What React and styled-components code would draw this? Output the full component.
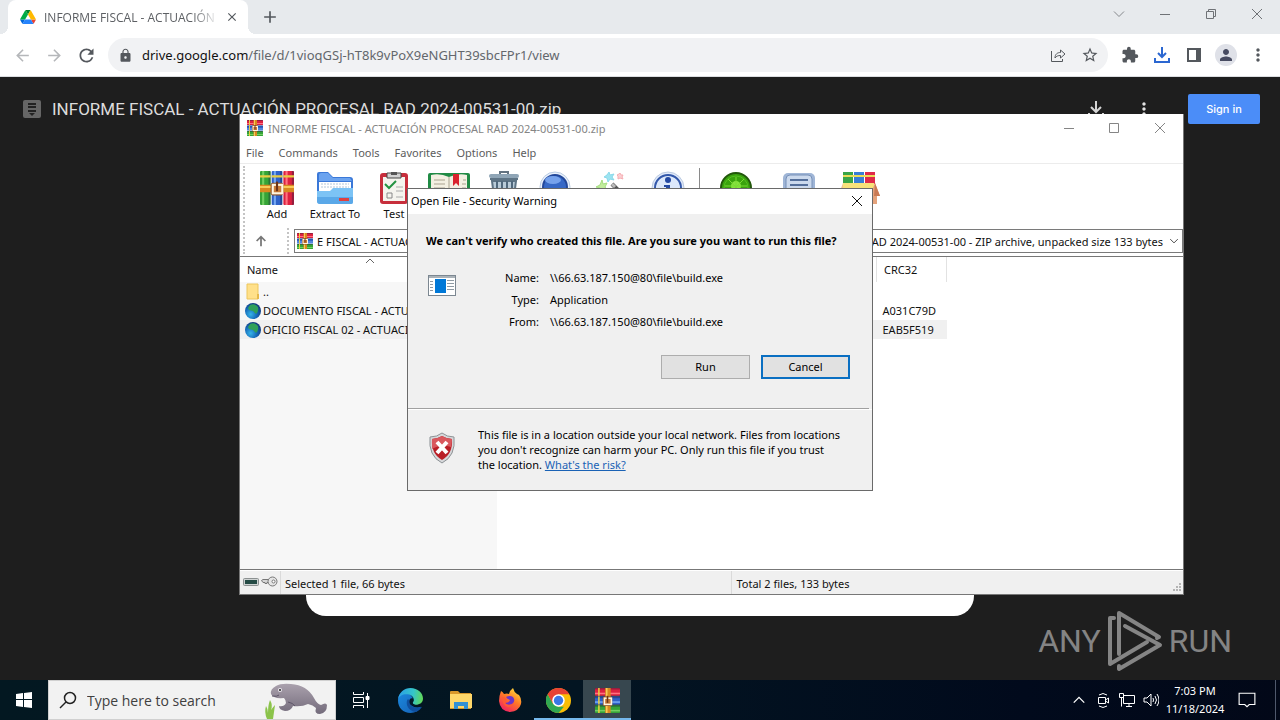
import React from "react";
import styled, { createGlobalStyle, css } from "styled-components";
import {
  MdArrowBack,
  MdArrowForward,
  MdRefresh,
  MdLock,
  MdStarBorder,
  MdExtension,
  MdPerson,
  MdMoreVert,
  MdClose,
  MdAdd,
} from "react-icons/md";

const Global = createGlobalStyle`
  * { box-sizing: border-box; }
  body { margin: 0; background: #1e1e1e; font-family: "Noto Sans", "Open Sans", sans-serif; font-size: 11px; color: #111; }
  button, input { font: inherit; color: inherit; margin: 0; }
  button { border: 0; padding: 0; background: none; }
  svg { display: block; flex: none; }
`;

const Desktop = styled.div`
  position: relative;
  display: flex;
  flex-direction: column;
  height: 100vh;
  overflow: hidden;
`;

/* ---------- Browser ---------- */

const Browser = styled.div`
  flex: 1;
  min-height: 0;
  display: flex;
  flex-direction: column;
`;

const TabStrip = styled.div`
  display: flex;
  align-items: stretch;
  height: 34px;
  padding-left: 8px;
  background: #e7eaed;
`;

const Tab = styled.div`
  position: relative;
  display: flex;
  align-items: center;
  width: 240px;
  padding: 0 9px 0 12px;
  background: #fff;
  border-radius: 8px 8px 0 0;
  &::before,
  &::after {
    content: "";
    position: absolute;
    bottom: 0;
    width: 8px;
    height: 8px;
  }
  &::before {
    left: -8px;
    background: radial-gradient(circle at 0 0, #e7eaed 8px, #fff 8px);
  }
  &::after {
    right: -8px;
    background: radial-gradient(circle at 100% 0, #e7eaed 8px, #fff 8px);
  }
`;

const TabTitle = styled.span`
  flex: 1;
  margin: 0 6px 0 8px;
  overflow: hidden;
  white-space: nowrap;
  font-family: "Open Sans", sans-serif;
  font-size: 12px;
  color: #5c5f63;
  mask-image: linear-gradient(to right, #000 85%, transparent);
`;

const IconButton = styled.button`
  display: flex;
  align-items: center;
  justify-content: center;
  width: ${(p) => p.$w || 32}px;
  height: ${(p) => p.$h || 28}px;
  color: ${(p) => p.$color || "#54585d"};
`;

const WindowControls = styled.div`
  display: flex;
  margin-left: auto;
`;

const BrowserBar = styled.div`
  display: flex;
  align-items: center;
  height: 43px;
  padding: 0 6px;
  background: #fff;
  border-bottom: 1px solid #dcdee1;
`;

const Omnibox = styled.div`
  flex: 1;
  display: flex;
  align-items: center;
  height: 34px;
  margin: 0 6px 0 6px;
  padding: 0 2px 0 10px;
  border-radius: 17px;
  background: #f1f2f4;
`;

const Url = styled.a`
  flex: 1;
  margin-left: 9px;
  font-size: 13px;
  color: #63676c;
  text-decoration: none;
  b {
    font-weight: 400;
    color: #111;
  }
`;

const Avatar = styled.span`
  display: flex;
  align-items: center;
  justify-content: center;
  width: 22px;
  height: 22px;
  border-radius: 50%;
  background: #dfe1e8;
  color: #474b61;
`;

const DrivePage = styled.main`
  flex: 1;
  display: flex;
  flex-direction: column;
  align-items: center;
  padding-bottom: 64px;
  background: #1e1e1e;
`;

const DriveHeader = styled.header`
  align-self: stretch;
  display: flex;
  align-items: center;
  height: 64px;
  padding: 0 20px 0 22px;
`;

const DriveTitle = styled.h1`
  flex: 1;
  margin: 0 0 0 10px;
  font: 400 17px/20px Roboto, sans-serif;
  color: #dcdcdc;
`;

const SignIn = styled.button`
  width: 72px;
  height: 30px;
  margin-left: 20px;
  border-radius: 2px;
  background: #4b8df8;
  color: #fff;
  font: 500 11px Inter, sans-serif;
`;

const PreviewCard = styled.div`
  flex: 1;
  width: 668px;
  border-radius: 20px;
  background: #fff;
`;

const Watermark = styled.div`
  position: absolute;
  right: 48px;
  bottom: 48px;
  display: flex;
  align-items: center;
  gap: 5px;
  color: #848484;
  font: 400 32px/62px Roboto, sans-serif;
`;

/* ---------- Archive window ---------- */

const ArchiveWindow = styled.section`
  position: absolute;
  left: 239px;
  right: 96px;
  top: 114px;
  bottom: 125px;
  display: flex;
  flex-direction: column;
  background: #fff;
  border: 1px solid #777;
  border-top-width: 0;
`;

const TitleBar = styled.div`
  display: flex;
  align-items: center;
  height: 28px;
  padding: 0 1px 0 7px;
  color: #858585;
  span {
    flex: 1;
    margin-left: 5px;
  }
`;

const MenuBar = styled.nav`
  display: flex;
  gap: 15px;
  height: 22px;
  padding: 0 6px;
  border-bottom: 1px solid #ececec;
  button {
    color: #5c5c5c;
    line-height: 20px;
  }
`;

const grip = css`
  border-left: 2px dotted #c4c4c4;
`;

const Bars = styled.div`
  margin: 2px 0 2px 3px;
  ${grip}
`;

const ToolBar = styled.div`
  display: flex;
  height: 62px;
  padding: 5px 0 0 3px;
`;

const Tool = styled.button`
  display: flex;
  flex-direction: column;
  align-items: center;
  width: ${(p) => p.$w}px;
  white-space: nowrap;
  line-height: 18px;
`;

const ToolDivider = styled.i`
  width: 18px;
  height: 48px;
  margin-top: -3px;
  background: linear-gradient(#8a8a8a, #8a8a8a) center / 1px 100% no-repeat;
`;

const AddressRow = styled.div`
  display: flex;
  align-items: center;
  height: 26px;
`;

const AddressGap = styled.i`
  align-self: stretch;
  width: 7px;
  margin-left: 10px;
  ${grip}
`;

const Combo = styled.button`
  flex: 1;
  display: flex;
  align-items: center;
  height: 24px;
  padding: 0 2px;
  border: 1px solid #7a7a7a;
  white-space: nowrap;
`;

const ComboStart = styled.span`
  flex: 1;
  margin-left: 4px;
  overflow: hidden;
  text-align: left;
`;

const ComboEnd = styled.span`
  margin-right: 5px;
`;

const ListArea = styled.div`
  flex: 1;
  position: relative;
  border-top: 1px solid #777;
  border-bottom: 1px solid #777;
  background: linear-gradient(#f7f7f7, #f7f7f7) 0 25px / 257px 100% no-repeat;
`;

const SortMark = styled.svg`
  position: absolute;
  left: 125px;
  top: 1px;
`;

const FileTable = styled.table`
  table-layout: fixed;
  width: 707px;
  border-collapse: collapse;
  th,
  td {
    padding: 0 6px;
    text-align: left;
    font-weight: 400;
    white-space: nowrap;
    overflow: hidden;
  }
  th {
    height: 25px;
    padding-left: 7px;
    border-right: 1px solid #e2e2e2;
  }
  td {
    height: 19px;
  }
  td:first-child {
    padding-left: 5px;
  }
`;

const FileRow = styled.tr`
  background: ${(p) => (p.$selected ? "#f0f0f0" : "transparent")};
`;

const FileName = styled.div`
  display: flex;
  align-items: center;
  gap: 2px;
  line-height: 18px;
`;

const StatusBar = styled.footer`
  display: flex;
  align-items: stretch;
  height: 23px;
  margin-top: 1px;
  background: #f0f0f0;
  line-height: 26px;
`;

const StatusIcons = styled.div`
  display: flex;
  align-items: center;
  gap: 2px;
  width: 41px;
  padding: 0 0 1px 3px;
  border-right: 1px solid #dadada;
`;

const StatusCell = styled.div`
  flex: ${(p) => p.$grow};
  padding-left: 4px;
  border-right: ${(p) => (p.$line ? "1px solid #dadada" : "0")};
`;

/* ---------- Dialog ---------- */

const Dialog = styled.section`
  position: absolute;
  left: 407px;
  top: 188px;
  width: 466px;
  background: #f0f0f0;
  border: 1px solid #6a6a6a;
  color: #000;
`;

const DialogTitle = styled.header`
  display: flex;
  align-items: center;
  justify-content: space-between;
  height: 25px;
  padding: 0 3px 2px 3px;
  background: #fff;
`;

const DialogBody = styled.div`
  padding: 18px 22px 29px 18px;
`;

const Question = styled.h2`
  margin: 0;
  font-size: 11px;
  line-height: 17px;
  font-weight: 700;
  white-space: nowrap;
`;

const Details = styled.div`
  display: flex;
  padding: 18px 0 22px 2px;
  svg {
    margin-top: 8px;
  }
`;

const Facts = styled.dl`
  display: grid;
  grid-template-columns: 83px 1fr;
  column-gap: 11px;
  margin: 0;
  line-height: 22px;
  dt {
    text-align: right;
  }
  dd {
    margin: 0;
  }
`;

const Actions = styled.div`
  display: flex;
  justify-content: flex-end;
  gap: 11px;
`;

const PushButton = styled.button`
  width: 89px;
  height: 24px;
  padding-bottom: 2px;
  background: #e1e1e1;
  border: ${(p) => (p.$focus ? "2px solid #0a6fc2" : "1px solid #adadad")};
`;

const DialogFooter = styled.footer`
  display: flex;
  height: 81px;
  padding: 17px 20px 0 20px;
  border-top: 1px solid #fff;
  svg {
    margin: 5px 0 0 0;
  }
  p {
    margin: 0 0 0 22px;
    line-height: 15px;
    white-space: nowrap;
  }
  a {
    color: #1a62b5;
  }
`;

const Rule = styled.hr`
  height: 1px;
  margin: 0 3px 0 0;
  border: 0;
  background: #a0a0a0;
`;

/* ---------- Taskbar ---------- */

const TaskBar = styled.footer`
  display: flex;
  height: 40px;
  background: linear-gradient(to right, #031821, #031522 45%, #010a1c 80%, #020818);
  color: #fff;
`;

const TaskButton = styled.button`
  display: flex;
  align-items: center;
  justify-content: center;
  width: ${(p) => p.$w || 49}px;
  height: 40px;
  color: #fff;
  background: ${(p) => (p.$active ? "#37474f" : "transparent")};
  box-shadow: ${(p) => (p.$open ? "inset 0 -2px #76b9ed" : "none")};
`;

const SearchBox = styled.label`
  display: flex;
  align-items: center;
  width: 288px;
  padding: 0 7px 0 10px;
  background: #f2f2f2;
  border: 1px solid #d0d0d0;
  input {
    flex: 1;
    min-width: 0;
    height: 30px;
    margin-left: 9px;
    padding: 1px;
    border: 0;
    background: transparent;
    font-family: "Open Sans", sans-serif;
    font-size: 14px;
  }
  input::placeholder {
    color: #404040;
    opacity: 1;
  }
`;

const Apps = styled.nav`
  display: flex;
  padding-left: 1px;
`;

const Tray = styled.div`
  display: flex;
  align-items: center;
  margin-left: auto;
  padding-right: 4px;
`;

const Clock = styled.time`
  width: 64px;
  text-align: center;
  line-height: 18px;
`;

const PeekLine = styled.i`
  width: 1px;
  height: 40px;
  margin-left: 8px;
  background: #4f586c;
`;

/* ---------- Drawings ---------- */

const BooksIcon = ({ size = 32, rotate = 0 }) => (
  <svg width={size} height={size} viewBox="0 0 32 32">
    <g transform={`rotate(${rotate} 16 16)`}>
      <rect width="10" height="32" rx="1" fill="#36a437" />
      <rect x="11" width="10" height="32" rx="1" fill="#2f62c8" />
      <rect x="22" width="10" height="32" rx="1" fill="#dc2140" />
      <path d="M2 0h2v32H2z" fill="#72cf62" />
      <path d="M13 0h2v32h-2z" fill="#75a8f2" />
      <path d="M24 0h2v32h-2z" fill="#ff7280" />
      <path d="M8 0h2v32H8zM19 0h2v32h-2zM30 0h2v32h-2z" fill="#17183c" opacity=".35" />
      <path d="M0 4h10v2H0zM11 4h10v2H11zM22 4h10v2H22z" fill="#e9cd43" />
      <path d="M0 13h32v7H0z" fill="#d88920" />
      <path d="M0 14h32v2H0z" fill="#f8cb58" />
    </g>
    <rect x="10" y="11" width="12" height="12" rx="2" fill="#8d5227" />
    <rect x="12" y="13" width="9" height="8" fill="#c97c38" stroke="#fff5df" strokeWidth="2" />
    <path d="M16 10v9" stroke="#6c3317" strokeWidth="2" />
  </svg>
);

const DriveLogo = () => (
  <svg width="16" height="14" viewBox="0 0 87.3 78">
    <path fill="#0066da" d="m6.6 66.85 3.85 6.65c.8 1.4 1.95 2.5 3.3 3.3L27.5 53H0c0 1.55.4 3.1 1.2 4.5z" />
    <path fill="#00ac47" d="M43.65 25 29.9 1.2c-1.35.8-2.5 1.9-3.3 3.3L1.2 48.5C.4 49.9 0 51.45 0 53h27.5z" />
    <path fill="#ea4335" d="M73.55 76.8c1.35-.8 2.5-1.9 3.3-3.3l1.6-2.75 7.65-13.25c.8-1.4 1.2-2.95 1.2-4.5H59.8l5.85 11.5z" />
    <path fill="#00832d" d="M43.65 25 57.4 1.2C56.05.4 54.5 0 52.9 0H34.4c-1.6 0-3.15.45-4.5 1.2z" />
    <path fill="#2684fc" d="M59.8 53H27.5L13.75 76.8c1.35.8 2.9 1.2 4.5 1.2h50.8c1.6 0 3.15-.45 4.5-1.2z" />
    <path fill="#ffba00" d="m73.4 26.5-12.7-22c-.8-1.4-1.95-2.5-3.3-3.3L43.65 25 59.8 53h27.45c0-1.55-.4-3.1-1.2-4.5z" />
  </svg>
);

const Line = ({ size = 16, d, sw = 1, ...rest }) => (
  <svg width={size} height={size} viewBox="0 0 16 16" fill="none" stroke="currentColor" strokeWidth={sw} {...rest}>
    <path d={d} />
  </svg>
);

const shapes = {
  min: "M3 8.5h10",
  max: "M3.5 3.5h9v9h-9z",
  restore: "M3.5 5.5h7v7h-7zM5.5 5.5v-2h7v7h-2",
  close: "M3 3l10 10M13 3L3 13",
  down: "M3 5.500l5 5 5-5",
};

const ShareIcon = () => (
  <Line d="M1.500 4v10.500h11V12M5 11c0-4 2.500-5.500 5.500-5.500V3l4.500 4-4.500 4V8.500C8 8.500 6.500 9 5 11z" />
);

const DownloadTray = () => (
  <svg width="18" height="18" viewBox="0 0 18 18" fill="none" stroke="#2b67d1" strokeWidth="2">
    <path d="M9 1v10M5 7l4 4 4-4M2 12v4h14v-4" />
  </svg>
);

const SidePanel = () => (
  <svg width="14" height="14" viewBox="0 0 14 14">
    <path fillRule="evenodd" d="M0 0h14v14H0zM2 2v10h7V2z" fill="currentColor" />
  </svg>
);

const ZipIcon = () => (
  <svg width="20" height="20" viewBox="0 0 20 20">
    <rect x="1" y="1" width="18" height="18" rx="2" fill="#666" />
    <path d="M6 5h8M6 8h8M6 12h8" stroke="#222" strokeWidth="2" />
    <path d="M7 14h6l-3 3z" fill="#222" />
  </svg>
);

const DriveDownload = () => (
  <svg width="20" height="20" viewBox="0 0 20 20" fill="none" stroke="#d4d4d4" strokeWidth="2">
    <path d="M10 2v10M5 8l5 5 5-5M3 14v4h14v-4" />
  </svg>
);

const FolderTool = () => (
  <svg width="38" height="34" viewBox="0 0 38 34">
    <path d="M1 25V3q0-2 2-2h9l5 5h17q3 0 3 3v18H3z" fill="#3a78d8" />
    <path d="M3 4q0-2 2-2h7l5 5h17l2 3H3z" fill="#6ba3ef" />
    <path d="M3 11h32v11H3z" fill="#fff" />
    <path d="M5 13h28M5 16h28" stroke="#b4c7d8" strokeDasharray="2 1" />
    <path d="M1 20h13l3-3h20v14q0 2-2 2H4q-3 0-3-3z" fill="#7cc3f5" />
    <path d="M1 26h36v5q0 2-2 2H4q-3 0-3-3z" fill="#5aa8e8" />
    <rect x="23" y="27" width="10" height="3" fill="#e0403f" />
  </svg>
);

const TestTool = () => (
  <svg width="30" height="34" viewBox="0 0 30 34">
    <rect x="1" y="2" width="28" height="31" rx="3" fill="#c72e3c" />
    <rect x="4" y="6" width="22" height="24" fill="#f5f4ee" />
    <path d="M8 2h14v5H8z" fill="#d2d2d2" stroke="#444" />
    <path d="M12 1h6v3h-6z" fill="#555" />
    <path d="m6 13 4 4 7-7" stroke="#249342" strokeWidth="2" fill="none" />
    <path d="M17 16h7M17 20h7M17 26h7" stroke="#aaa" />
    <path d="M8 22h5v5H8z" fill="none" stroke="#888" />
  </svg>
);

const BookTool = () => (
  <svg width="44" height="32" viewBox="0 0 44 32">
    <rect x="1" y="2" width="42" height="28" rx="2" fill="#218b45" />
    <path d="M4 4q9-2 18 2 9-4 18-2v24H4z" fill="#f4f0e2" />
    <path d="M22 6v22M7 9h11M7 13h11M7 17h11M36 9h3M35 13h4M35 17h4" stroke="#aaa390" />
    <path d="M26 3h6v12l-3-3-3 3z" fill="#d9232e" />
  </svg>
);

const TrashTool = () => (
  <svg width="32" height="34" viewBox="0 0 32 34">
    <path d="M12 3V1h8v2" fill="none" stroke="#637381" strokeWidth="2" />
    <rect x="1" y="3" width="30" height="4" rx="2" fill="#8fa5b6" />
    <path d="M2 8h28M4 10l3 23h18l3-23z" fill="#b9cbd8" stroke="#5e7485" strokeWidth="2" />
    <path d="M9 10v20M14 10v20M19 10v20M24 10v20" stroke="#50687c" strokeWidth="2" />
  </svg>
);

const FindTool = () => (
  <svg width="34" height="34" viewBox="0 0 34 34">
    <circle cx="17" cy="16" r="15" fill="#eaf1fb" stroke="#b9cbe3" />
    <circle cx="17" cy="16" r="12" fill="#3668c6" stroke="#22479a" strokeWidth="2" />
    <ellipse cx="15" cy="9" rx="8" ry="4" fill="#76a2ec" />
  </svg>
);

const WizardTool = () => (
  <svg width="34" height="34" viewBox="0 0 34 34" fill="none">
    <path d="m18 13 14 14" stroke="#555" strokeWidth="4" />
    <path d="m18 13 3 3" stroke="#bbb" strokeWidth="3" />
    <g>
      <path d="m15 1 1 3 4-1-2 3 2 3-4-1-2 3-1-4-3-1 3-2z" fill="#9ce4f1" stroke="#8bd9ea" />
      <path d="m8 9 1 4 4-1-2 4 2 3-4-1-2 3-1-4-4-1 4-2z" fill="#c1ec9c" stroke="#a4dd80" />
      <path d="m26 2 1 2 2 0-1 2 1 2-3-1-2 1 0-3-1-1 2-1z" fill="#fbd0d3" stroke="#f6aeb3" />
    </g>
  </svg>
);

const InfoTool = () => (
  <svg width="34" height="34" viewBox="0 0 34 34">
    <circle cx="17" cy="17" r="16" fill="#e1eafa" stroke="#bac9df" />
    <circle cx="17" cy="17" r="13" fill="#dce8fb" stroke="#3358aa" strokeWidth="2" />
    <circle cx="17" cy="9" r="3" fill="#2449a2" />
    <path d="M13 14h6v10h3v2h-9v-2h2v-8h-2z" fill="#2449a2" />
  </svg>
);

const VirusTool = () => (
  <svg width="34" height="34" viewBox="0 0 34 34">
    <circle cx="17" cy="17" r="15" fill="#39a30d" stroke="#22570b" strokeWidth="2" />
    <circle cx="17" cy="17" r="12" fill="none" stroke="#55bd22" />
    <circle cx="17" cy="15" r="5" fill="#86e23f" />
    <path d="M17 6v22M6 15h22M9 8l16 16M25 8 9 24" stroke="#7bdc34" />
  </svg>
);

const CommentTool = () => (
  <svg width="34" height="34" viewBox="0 0 34 34">
    <rect x="1" y="2" width="32" height="27" rx="5" fill="#9fb5d6" />
    <rect x="4" y="4" width="26" height="22" rx="4" fill="#cbd9ed" stroke="#7690b8" />
    <path d="M8 9h18M8 14h18M8 19h18" stroke="#546f9b" strokeWidth="2" />
  </svg>
);

const SfxTool = () => (
  <svg width="40" height="34" viewBox="0 0 40 34">
    <rect x="3" y="1" width="10" height="12" fill="#39a546" />
    <rect x="14" y="1" width="10" height="12" fill="#377ed5" />
    <rect x="25" y="1" width="10" height="12" fill="#df2949" />
    <path d="M3 5h32" stroke="#ebdc57" strokeWidth="2" />
    <path d="M3 12h31l5 13h-4v8H2V20H0z" fill="#f3c48f" />
    <path d="M3 12h31v6H3z" fill="#f8e27a" />
    <path d="m35 12 5 13h-3v8h-6V22z" fill="#e5a37c" />
    <path d="m35 12 5 13h-6z" fill="#c97a55" />
  </svg>
);

const FolderSmall = () => (
  <svg width="16" height="17" viewBox="0 0 16 17">
    <path d="M2 1h11v15H2z" fill="#ffe08a" stroke="#edc65d" />
    <path d="M12 11h2v5h-2z" fill="#e6b84a" />
  </svg>
);

const GlobeSmall = () => (
  <svg width="16" height="16" viewBox="0 0 16 16">
    <defs>
      <radialGradient id="sea" cx=".35" cy=".7" r=".8">
        <stop offset="0" stopColor="#35b4e8" />
        <stop offset=".5" stopColor="#1668b8" />
        <stop offset="1" stopColor="#12306e" />
      </radialGradient>
    </defs>
    <circle cx="8" cy="8" r="8" fill="url(#sea)" />
    <path d="M5 2q5-2 8 2 1 4-2 7l-3-3-4-1-1-2z" fill="#2fa05a" />
  </svg>
);

const AppIcon = () => (
  <svg width="28" height="21" viewBox="0 0 28 21">
    <rect x=".5" y=".5" width="27" height="20" fill="#fff" stroke="#7c8791" />
    <path d="M1 2h26" stroke="#aab2b8" strokeWidth="2" />
    <rect x="7" y="4" width="11" height="14" fill="#0078d7" />
    <path d="M2 6.500h3M2 9.500h3M2 12.500h3M2 15.500h3M19 5.500h7M19 8.500h7M19 11.500h7M19 14.500h7" stroke="#8f9aa3" />
  </svg>
);

const Shield = () => (
  <svg width="28" height="32" viewBox="0 0 28 32">
    <path d="M14 1q5 4 12 4 2 19-12 26Q0 24 2 5q7 0 12-4z" fill="#d6d8da" stroke="#8d9296" />
    <path d="M14 4q5 3 10 3 1 15-10 21Q3 22 4 7q5 0 10-3z" fill="#b91f27" />
    <path d="M14 4q5 3 10 3 0 4-1 8-9-4-19 2V7q5 0 10-3z" fill="#d9585e" />
    <path d="m9 10 10 11M19 10 9 21" stroke="#fff" strokeWidth="4" />
  </svg>
);

const DiskIcon = () => (
  <svg width="16" height="9" viewBox="0 0 16 9">
    <rect x=".5" y=".5" width="15" height="7" rx="1" fill="#cfd3d3" stroke="#8c9191" />
    <rect x="2" y="2" width="12" height="4" fill="#254b45" />
  </svg>
);

const KeyIcon = () => (
  <svg width="17" height="12" viewBox="0 0 17 12" fill="none" stroke="#777">
    <path d="M8 3.500H2l-1.500 1 1.500 2h2v1h2v-1h2" fill="#d5d5d5" />
    <circle cx="11.500" cy="5.500" r="4.500" fill="#e5e5e5" />
    <circle cx="12.500" cy="5.500" r="1.500" fill="#fff" />
  </svg>
);

const ResizeGrip = styled.svg`
  align-self: flex-end;
`;

const PlayMark = () => (
  <svg width="58" height="62" viewBox="0 0 58 62" fill="none" stroke="#858585" strokeWidth="4" strokeLinejoin="round" strokeLinecap="round">
    <path d="M13 44V3l40 24-2 1" />
    <path d="M8 8H4v46l37-22" />
    <path d="m19 16 35 19-41 24v-3" />
  </svg>
);

const StartLogo = () => (
  <svg width="16" height="16" viewBox="0 0 16 16" fill="#fff">
    <path d="m0 2 7-1v6H0zM8 1l8-1v7H8zM0 8h7v7l-7-1zM8 8h8v8l-8-1z" />
  </svg>
);

const Manatee = () => (
  <svg width="64" height="38" viewBox="0 0 64 38">
    <defs>
      <linearGradient id="skin" x1="0" y1="0" x2="0" y2="1">
        <stop offset="0" stopColor="#aaa1ad" />
        <stop offset="1" stopColor="#736b7b" />
      </linearGradient>
    </defs>
    <path d="M3 38q-3-7-1-13 2 3 2 7 0-8 2-13 3 5 1 10 2-3 4-5-1 7-2 14z" fill="#8bc34a" />
    <path d="M7 13q-1-5 5-8Q17 2 27 3q16 1 23 14 3 6 7 7 5-3 6 0 0 8-7 9-6 0-4-6-3-3-8-4-6 3-15 2-2 5-8 5-6-1-6-5 5 1 7-3 0-3-2-5Q9 18 7 13z" fill="url(#skin)" />
    <circle cx="16" cy="9" r="2" fill="#e9e6ec" />
    <circle cx="16" cy="9" r="1" fill="#222" />
    <path d="M8 15q5 1 7-1M24 21q5 1 7 4" stroke="#5d5568" fill="none" />
  </svg>
);

const TaskView = () => (
  <svg width="18" height="18" viewBox="0 0 18 18" fill="none" stroke="currentColor">
    <path d="M1.500 1v2.500h10V1M1.500 17v-2.500h10V17M1.500 6.500h10v5h-10zM15.500 2v3M15.500 9v8" />
    <path d="M14 5.500h3v3h-3z" fill="currentColor" />
  </svg>
);

const EdgeLogo = () => (
  <svg width="25" height="25" viewBox="0 0 24 24">
    <defs>
      <linearGradient id="edgeTop" x1="0" x2="1" y1=".4" y2=".5">
        <stop offset="0" stopColor="#2a9ee8" />
        <stop offset=".6" stopColor="#35c6c9" />
        <stop offset="1" stopColor="#62d957" />
      </linearGradient>
      <linearGradient id="edgeBase" x1="0" x2="1" y1="0" y2="1">
        <stop offset="0" stopColor="#1b8ae0" />
        <stop offset="1" stopColor="#1560b4" />
      </linearGradient>
    </defs>
    <path d="M0 12C0 6 4 3 9 3l5 6-1 8q5 3 9 1-3 6-10 6C5 24 0 19 0 12z" fill="url(#edgeBase)" />
    <path d="M9 11c-2 5 1 11 8 12 3-1 5-3 6-5-4 2-9 1-10-2-1-2-1-4 0-5z" fill="#0f4f9e" />
    <path d="M0 11C1 4 6 0 12 0c7 0 12 5 12 10 0 4-3 6-7 6-2 0-3-1-3-2 0 0 1-1 1-3 0-3-3-5-7-5-4 0-7 2-8 5z" fill="url(#edgeTop)" />
    <path d="M12 10q3-1 3 2 0 1-1 2 0 2 4 3-4 1-6-1-2-3 0-6z" fill="#031a29" />
  </svg>
);

const ExplorerLogo = () => (
  <svg width="22" height="20" viewBox="0 0 22 20">
    <path d="M0 2q0-1 1-1h7l2 2h11v16H0z" fill="#d9982b" />
    <path d="M0 4h22v14H0z" fill="#ffd76a" />
    <path d="M4 19v-7h14v7h-4v-3H8v3z" fill="#3390d4" />
  </svg>
);

const FirefoxLogo = () => (
  <svg width="24" height="24" viewBox="0 0 24 24">
    <defs>
      <linearGradient id="fox" x1=".8" y1="0" x2=".2" y2="1">
        <stop offset="0" stopColor="#ffe23d" />
        <stop offset=".45" stopColor="#ff7a26" />
        <stop offset="1" stopColor="#f01a67" />
      </linearGradient>
    </defs>
    <path d="M3 3q2 1 3 3 3-1 5 0 1-4 4-6 1 4 4 6l2 1q3 4 2 9-2 7-11 8Q2 23 1 13q0-5 2-10z" fill="url(#fox)" />
    <path d="M8 9q4-2 7 0 3 4-1 7-5 2-7-1 4 0 5-3-3-1-4-3z" fill="#6a35c9" />
    <path d="M4 9q3 0 5 2l-2 4q4 4 9 0-2 4-6 4-6-2-6-10z" fill="#ff5a35" />
  </svg>
);

const ChromeLogo = () => (
  <svg width="25" height="25" viewBox="0 0 24 24">
    <circle cx="12" cy="12" r="12" fill="#fabd05" />
    <path d="M1.600 6 6.800 15 12 18h5.200L12 24A12 12 0 0 1 1.600 6z" fill="#30a852" />
    <path d="M1.600 6A12 12 0 0 1 22.400 6H12L6.800 15z" fill="#e64234" />
    <circle cx="12" cy="12" r="6" fill="#fff" />
    <circle cx="12" cy="12" r="4.500" fill="#3978e6" />
  </svg>
);

/* ---------- Data ---------- */

const tools = [
  { label: "Add", w: 58, icon: <BooksIcon size={34} />, shown: true },
  { label: "Extract To", w: 58, icon: <FolderTool />, shown: true },
  { label: "Test", w: 60, icon: <TestTool />, shown: true },
  { label: "View", w: 50, icon: <BookTool /> },
  { label: "Delete", w: 60, icon: <TrashTool /> },
  { label: "Find", w: 42, icon: <FindTool /> },
  { label: "Wizard", w: 70, icon: <WizardTool /> },
  { label: "Info", w: 44, icon: <InfoTool /> },
  null,
  { label: "VirusScan", w: 56, icon: <VirusTool /> },
  { label: "Comment", w: 70, icon: <CommentTool /> },
  { label: "SFX", w: 52, icon: <SfxTool /> },
];

const files = [
  { name: "..", icon: <FolderSmall />, crc: "" },
  { name: "DOCUMENTO FISCAL - ACTUACIÓN", icon: <GlobeSmall />, crc: "A031C79D" },
  { name: "OFICIO FISCAL 02 - ACTUACIÓN", icon: <GlobeSmall />, crc: "EAB5F519", selected: true },
];

const archive = "INFORME FISCAL - ACTUACIÓN PROCESAL RAD 2024-00531-00.zip";

function ChromeWindow() {
  return (
    <Browser>
      <TabStrip>
        <Tab>
          <DriveLogo />
          <TabTitle>INFORME FISCAL - ACTUACIÓN</TabTitle>
          <IconButton $w={14} aria-label="Close tab"><MdClose size={14} /></IconButton>
        </Tab>
        <IconButton $w={44} $h={34} aria-label="New tab"><MdAdd size={20} /></IconButton>
        <WindowControls>
          <IconButton $w={46} $color="#85888c" aria-label="Search tabs"><Line d={shapes.down} /></IconButton>
          <IconButton $w={46} $color="#6f7276" aria-label="Minimize"><Line d={shapes.min} /></IconButton>
          <IconButton $w={46} $color="#6f7276" aria-label="Restore"><Line d={shapes.restore} /></IconButton>
          <IconButton $w={46} $color="#6f7276" aria-label="Close"><Line d={shapes.close} /></IconButton>
        </WindowControls>
      </TabStrip>
      <BrowserBar>
        <IconButton $color="#b5b7ba" aria-label="Back"><MdArrowBack size={19} /></IconButton>
        <IconButton $color="#b5b7ba" aria-label="Forward"><MdArrowForward size={19} /></IconButton>
        <IconButton aria-label="Reload"><MdRefresh size={21} /></IconButton>
        <Omnibox>
          <MdLock size={15} color="#54585d" />
          <Url href="#file"><b>drive.google.com</b>/file/d/1vioqGSj-hT8k9vPoX9eNGHT39sbcFPr1/view</Url>
          <IconButton aria-label="Share"><ShareIcon /></IconButton>
          <IconButton aria-label="Bookmark"><MdStarBorder size={18} /></IconButton>
        </Omnibox>
        <IconButton aria-label="Extensions"><MdExtension size={18} /></IconButton>
        <IconButton aria-label="Downloads"><DownloadTray /></IconButton>
        <IconButton aria-label="Side panel"><SidePanel /></IconButton>
        <IconButton aria-label="Profile"><Avatar><MdPerson size={18} /></Avatar></IconButton>
        <IconButton aria-label="Menu"><MdMoreVert size={20} /></IconButton>
      </BrowserBar>
      <DrivePage>
        <DriveHeader>
          <ZipIcon />
          <DriveTitle>{archive}</DriveTitle>
          <IconButton $w={48} aria-label="Download"><DriveDownload /></IconButton>
          <IconButton $w={48} $color="#e3e3e3" aria-label="More"><MdMoreVert size={20} /></IconButton>
          <SignIn>Sign in</SignIn>
        </DriveHeader>
        <PreviewCard />
      </DrivePage>
    </Browser>
  );
}

function WinRar() {
  return (
    <ArchiveWindow>
      <TitleBar>
        <BooksIcon size={16} rotate={-90} />
        <span>{archive}</span>
        <IconButton $w={45} $color="#858585" aria-label="Minimize"><Line d={shapes.min} /></IconButton>
        <IconButton $w={46} $color="#858585" aria-label="Maximize"><Line d={shapes.max} /></IconButton>
        <IconButton $w={45} $color="#858585" aria-label="Close"><Line d={shapes.close} /></IconButton>
      </TitleBar>
      <MenuBar>
        {["File", "Commands", "Tools", "Favorites", "Options", "Help"].map((m) => (
          <button key={m}>{m}</button>
        ))}
      </MenuBar>
      <Bars>
        <ToolBar>
          {tools.map((t) =>
            t ? (
              <Tool key={t.label} $w={t.w} aria-label={t.label}>
                {t.icon}
                {t.shown && t.label}
              </Tool>
            ) : (
              <ToolDivider key="divider" />
            )
          )}
        </ToolBar>
        <AddressRow>
          <IconButton aria-label="Up one level" $color="#777"><Line d="M8 14V3M3 8l5-5 5 5" sw={2} size={14} /></IconButton>
          <AddressGap />
          <Combo aria-label="Archive path">
            <BooksIcon size={16} rotate={-90} />
            <ComboStart>E FISCAL - ACTUACIÓN</ComboStart>
            <ComboEnd>RAD 2024-00531-00 - ZIP archive, unpacked size 133 bytes</ComboEnd>
            <Line d={shapes.down} size={12} />
          </Combo>
        </AddressRow>
      </Bars>
      <ListArea>
        <SortMark width="10" height="6" viewBox="0 0 10 6" fill="none" stroke="#666"><path d="m1 5 4-4 4 4" /></SortMark>
        <FileTable>
          <colgroup><col style={{ width: 257 }} /><col /><col style={{ width: 70 }} /></colgroup>
          <thead><tr><th>Name</th><th /><th>CRC32</th></tr></thead>
          <tbody>
            {files.map((f) => (
              <FileRow key={f.name} $selected={f.selected}>
                <td><FileName>{f.icon}{f.name}</FileName></td>
                <td />
                <td>{f.crc}</td>
              </FileRow>
            ))}
          </tbody>
        </FileTable>
      </ListArea>
      <StatusBar>
        <StatusIcons><DiskIcon /><KeyIcon /></StatusIcons>
        <StatusCell $grow="451" $line>Selected 1 file, 66 bytes</StatusCell>
        <StatusCell $grow="439">Total 2 files, 133 bytes</StatusCell>
        <ResizeGrip width="12" height="12" viewBox="0 0 12 12" fill="#b4b4b4">
          <path d="M8 1h2v2H8zM5 4h2v2H5zM8 4h2v2H8zM2 7h2v2H2zM5 7h2v2H5zM8 7h2v2H8z" />
        </ResizeGrip>
      </StatusBar>
    </ArchiveWindow>
  );
}

function SecurityWarning() {
  return (
    <Dialog role="dialog" aria-label="Open File - Security Warning">
      <DialogTitle>
        <span>Open File - Security Warning</span>
        <IconButton $w={24} $color="#111" aria-label="Close"><Line d={shapes.close} /></IconButton>
      </DialogTitle>
      <DialogBody>
        <Question>We can't verify who created this file. Are you sure you want to run this file?</Question>
        <Details>
          <AppIcon />
          <Facts>
            <dt>Name:</dt><dd>\\66.63.187.150@80\file\build.exe</dd>
            <dt>Type:</dt><dd>Application</dd>
            <dt>From:</dt><dd>\\66.63.187.150@80\file\build.exe</dd>
          </Facts>
        </Details>
        <Actions>
          <PushButton>Run</PushButton>
          <PushButton $focus>Cancel</PushButton>
        </Actions>
      </DialogBody>
      <Rule />
      <DialogFooter>
        <Shield />
        <p>
          This file is in a location outside your local network. Files from locations<br />
          you don't recognize can harm your PC. Only run this file if you trust<br />
          the location. <a href="#risk">What's the risk?</a>
        </p>
      </DialogFooter>
    </Dialog>
  );
}

function WindowsTaskBar() {
  return (
    <TaskBar>
      <TaskButton $w={48} aria-label="Start"><StartLogo /></TaskButton>
      <SearchBox>
        <svg width="18" height="18" viewBox="0 0 18 18" fill="none" stroke="#222" strokeWidth="1.500">
          <circle cx="11" cy="7" r="5.500" /><path d="m7 11-6 6" />
        </svg>
        <input aria-label="Search" placeholder="Type here to search" />
        <Manatee />
      </SearchBox>
      <Apps>
        <TaskButton $w={48} aria-label="Task view"><TaskView /></TaskButton>
        <TaskButton $w={51} aria-label="Edge"><EdgeLogo /></TaskButton>
        <TaskButton aria-label="File Explorer"><ExplorerLogo /></TaskButton>
        <TaskButton aria-label="Firefox"><FirefoxLogo /></TaskButton>
        <TaskButton aria-label="Chrome" $open><ChromeLogo /></TaskButton>
        <TaskButton $w={48} aria-label="WinRAR" $open $active><BooksIcon size={25} rotate={-90} /></TaskButton>
      </Apps>
      <Tray>
        <TaskButton $w={24} aria-label="Hidden icons"><Line d="m2 11 6-6 6 6" size={14} sw={1.5} /></TaskButton>
        <TaskButton $w={24} aria-label="Camera"><Line d="M3.500 5.500h7v6h-7zM10.500 8l3-2v5l-3-2M4 3q4-3 8 0M4 14q4 3 8 0" /></TaskButton>
        <TaskButton $w={24} aria-label="Network"><Line d="M4.500 3.500h11v8h-11zM10 12v2.500M7 14.500h6M.500 1.500h4v4h-4zM2.500 5.500v9" /></TaskButton>
        <TaskButton $w={24} aria-label="Volume"><Line d="M1 6h3l4-4v12L4 10H1zM10 6q1 2 0 4M12 4q3 4 0 8M14 2q4 6 0 12" /></TaskButton>
        <Clock>7:03 PM<br />11/18/2024</Clock>
        <TaskButton $w={40} aria-label="Notifications"><Line size={18} d="M1 2h14v10h-5l-2 2-2-2H1z" /></TaskButton>
        <PeekLine />
      </Tray>
    </TaskBar>
  );
}

export default function App() {
  return (
    <Desktop>
      <Global />
      <ChromeWindow />
      <Watermark><span>ANY</span><PlayMark /><span>RUN</span></Watermark>
      <WinRar />
      <SecurityWarning />
      <WindowsTaskBar />
    </Desktop>
  );
}
